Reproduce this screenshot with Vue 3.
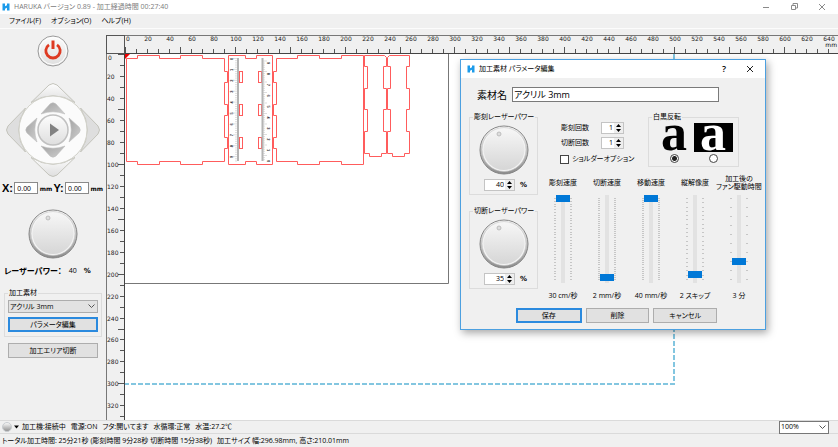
<script setup>
import { ref } from 'vue'

const SCALE = 1.098
const px = (mm) => Math.round(mm * SCALE)
const ticks = Array.from({ length: 130 }, (_, i) => i * 10)
const labelsX = Array.from({ length: 32 }, (_, i) => (i + 1) * 20)
const labelsY = labelsX.slice(0, 16)

const material = ref('アクリル 3mm')
const zoom = ref('100%')
const posX = ref('0.00')
const posY = ref('0.00')
const invert = ref('normal')
const shoulder = ref(false)

const powers = ref([
  { id: 'engrave-power', title: '彫刻レーザーパワー', value: 40 },
  { id: 'cut-power', title: '切断レーザーパワー', value: 35 },
])
const counts = ref([
  { id: 'engrave-count', title: '彫刻回数', value: 1 },
  { id: 'cut-count', title: '切断回数', value: 1 },
])
const sliders = ref([
  { id: 's1', title: ['彫刻速度'], marks: 30, value: 100, text: '30 cm/秒' },
  { id: 's2', title: ['切断速度'], marks: 40, value: 3, text: '2 mm/秒' },
  { id: 's3', title: ['移動速度'], marks: 40, value: 100, text: '40 mm/秒' },
  { id: 's4', title: ['縦解像度'], marks: 20, value: 6, text: '2 スキップ' },
  { id: 's5', title: ['加工後の', 'ファン駆動時間'], marks: 10, value: 22, text: '3 分' },
])
const markY = (i, n) => Math.round((i * 81) / (n - 1)) + 3

const slots = [17, 50, 83]
const digits = Array.from({ length: 10 }, (_, i) => i)
const fineMarks = Array.from({ length: 48 }, (_, i) => i)
</script>

<template>
  <div class="app">
    <svg class="defs" width="0" height="0" aria-hidden="true">
      <defs>
        <linearGradient id="rim" x1="0" y1="0" x2="0" y2="1">
          <stop offset="0" stop-color="#ffffff" />
          <stop offset="1" stop-color="#8c8c8c" />
        </linearGradient>
        <linearGradient id="face" x1="0" y1="0" x2="0" y2="1">
          <stop offset="0" stop-color="#f6f6f6" />
          <stop offset="1" stop-color="#d6d6d6" />
        </linearGradient>
        <linearGradient id="pad" x1="0" y1="0" x2="0" y2="1">
          <stop offset="0" stop-color="#fdfdfd" />
          <stop offset="1" stop-color="#dedede" />
        </linearGradient>
        <linearGradient id="arrow" x1="0" y1="0" x2="1" y2="1">
          <stop offset="0" stop-color="#a2a2a2" />
          <stop offset="1" stop-color="#cfcfcf" />
        </linearGradient>
        <symbol id="knob" viewBox="0 0 50 50">
          <circle cx="25" cy="25" r="24" fill="url(#rim)" stroke="#858585" />
          <circle cx="25" cy="24.5" r="22" fill="#f4f4f4" stroke="#c2c2c2" stroke-width=".6" />
          <circle cx="25" cy="24.5" r="20.5" fill="url(#face)" />
          <circle cx="20" cy="9" r="2" fill="#dedede" stroke="#b4b4b4" stroke-width=".8" />
        </symbol>
        <symbol id="logo" viewBox="0 0 8 8">
          <path d="M0.500 0.500h2.500v2.700l2-1V0.500h2.500v7H5V4.800l-2 1v1.700H0.500z" fill="#1d9bea" />
        </symbol>
      </defs>
    </svg>

    <header class="titlebar">
      <svg class="logo" aria-hidden="true"><use href="#logo" /></svg>
      <h1>HARUKA バージョン 0.89 - 加工経過時間 00:27:40</h1>
      <div class="winbtns">
        <button type="button" aria-label="最小化"><svg width="8" height="8"><path d="M1 4.500h6" /></svg></button>
        <button type="button" aria-label="元に戻す"><svg width="8" height="8"><path d="M1.500 2.500h4v4h-4zM3 2V.5h4.500V5H6" /></svg></button>
        <button type="button" aria-label="閉じる"><svg width="8" height="8"><path d="M1 1l6 6M7 1L1 7" /></svg></button>
      </div>
    </header>

    <nav class="menubar">
      <a href="#file">ファイル(F)</a>
      <a href="#option">オプション(O)</a>
      <a href="#help">ヘルプ(H)</a>
    </nav>

    <main class="main">
      <aside class="side">
        <button type="button" class="power" aria-label="電源">
          <svg width="32" height="32" viewBox="0 0 32 32">
            <circle cx="16" cy="16" r="15" fill="url(#pad)" stroke="#9a9a9a" />
            <circle cx="16" cy="16" r="13.500" fill="none" stroke="#fff" />
            <path d="M12 9.800a7.200 7.200 0 1 0 8 0" fill="none" stroke="#de3a22" stroke-width="2.800" />
            <path d="M16 5.500v8.500" stroke="#de3a22" stroke-width="3" />
          </svg>
        </button>

        <div class="dpad">
          <svg viewBox="0 0 96 96" aria-hidden="true">
            <g fill="url(#pad)" stroke="#c4c4bc">
              <path d="M26 20.500L44 3Q48 0 52 3L70 20.500Q48 7 26 20.500z" />
              <path d="M26 75.500L44 93Q48 96 52 93L70 75.500Q48 89 26 75.500z" />
              <path d="M20.500 26L3 44Q0 48 3 52L20.500 70Q7 48 20.500 26z" fill="#dedede" />
              <path d="M75.500 26L93 44Q96 48 93 52L75.500 70Q89 48 75.500 26z" fill="#dedede" />
            </g>
            <circle cx="48" cy="48" r="34" fill="#fbfbfb" stroke="#d2d2ca" />
            <g fill="url(#arrow)" stroke="#bdbdbd" stroke-width=".6">
              <path d="M36 32L45 22Q48 19.500 51 22L60 32Q48 27.500 36 32z" />
              <path d="M36 64L45 74Q48 76.500 51 74L60 64Q48 68.500 36 64z" />
              <path d="M32 36L22 45Q19.500 48 22 51L32 60Q27.500 48 32 36z" />
              <path d="M64 36L74 45Q76.500 48 74 51L64 60Q68.500 48 64 36z" />
            </g>
            <circle cx="48" cy="48" r="15" fill="url(#pad)" stroke="#c0c0c0" stroke-width="1.500" />
            <path d="M45 41.500v13l9-6.500z" fill="#828282" />
          </svg>
          <button type="button" class="up" aria-label="上"></button>
          <button type="button" class="left" aria-label="左"></button>
          <button type="button" class="center" aria-label="開始"></button>
          <button type="button" class="right" aria-label="右"></button>
          <button type="button" class="down" aria-label="下"></button>
        </div>

        <div class="coords">
          <label for="px">X:</label><input id="px" v-model="posX" type="text" /><b>mm</b>
          <label for="py">Y:</label><input id="py" v-model="posY" type="text" /><b>mm</b>
        </div>

        <svg class="knob" aria-hidden="true"><use href="#knob" /></svg>
        <p class="laser"><b>レーザーパワー：</b><span>40</span><b>%</b></p>

        <fieldset class="group material">
          <legend>加工素材</legend>
          <span class="select">
            <select v-model="material" aria-label="加工素材"><option>アクリル 3mm</option></select>
            <svg width="7" height="5"><path d="M.5.5l3 3 3-3" /></svg>
          </span>
          <button type="button" class="btn primary">パラメータ編集</button>
        </fieldset>
        <button type="button" class="btn area">加工エリア切断</button>
      </aside>

      <section class="work">
        <div class="corner"></div>
        <div class="hruler">
          <svg>
            <path v-for="t in ticks" :key="t" :d="`M${px(t) + 0.5} ${t % 50 ? 13 : 11}V18`" />
            <text x="1" y="5">0</text>
            <text v-for="l in labelsX" :key="l" :x="px(l) + 1" y="5" text-anchor="middle">{{ l }}</text>
          </svg>
          <b>mm</b>
        </div>
        <div class="vruler">
          <svg>
            <path v-for="t in ticks" :key="t" :d="`M${t % 50 ? 13 : 11} ${px(t) + 0.5}H18`" />
            <text x="1" y="6">0</text>
            <text v-for="l in labelsY" :key="l" x="0" :y="px(l) + 3">{{ l }}</text>
          </svg>
        </div>
        <div class="canvas">
          <svg>
            <path class="sheet" d="M323.500 0V229.500H0" />
            <path class="bed" d="M549 0V330H0" />
            <path class="origin" d="M0 0h5L0 5z" />
            <g class="cut">
              <path d="M1.500 4.500H12.500V1.500H34.500V4.500H55.500V1.500H77.500V4.500H99.500V17.500H102.500V28.500H99.500V50.500H102.500V61.500H99.500V83.500H102.500V94.500H99.500V107.500H77.500V110.500H55.500V107.500H34.500V110.500H12.500V107.500H1.500z" />
              <path d="M103.500 1.500H120.500V4.500H131.500V1.500H147.500V110.500H131.500V107.500H120.500V110.500H103.500z" />
              <g v-for="s in slots" :key="s">
                <rect x="114.500" :y="s + 0.5" width="3" height="11" />
                <rect x="133.500" :y="s + 0.5" width="3" height="11" />
              </g>
              <path d="M151.500 4.500H172.500V1.500H194.500V4.500H216.500V1.500H238.500V110.500H216.500V107.500H194.500V110.500H172.500V107.500H151.500V94.500H148.500V83.500H151.500V61.500H148.500V50.500H151.500V28.500H148.500V17.500H151.500z" />
              <path d="M239.500 1.500H259.500L261.500 3.500V12.500H258.500V34.500H261.500V55.500H258.500V77.500H261.500V99.500H256.500V102.500H244.500V99.500H239.500V77.500H242.500V55.500H239.500V34.500H242.500V12.500H239.500z" />
              <path d="M264.500 1.500H284.500V12.500H281.500V34.500H284.500V55.500H281.500V77.500H284.500V99.500H279.500V102.500H267.500V99.500H262.500V77.500H265.500V55.500H262.500V34.500H265.500V12.500H262.500V3.500z" />
            </g>
            <g class="scale">
              <path d="M113 4V107M137.500 4V107" class="bar" />
              <path v-for="m in fineMarks" :key="m" :d="`M${m % 5 ? 110 : 108} ${4.5 + m * 2.18}H112M138 ${7 + m * 2.1}H${m % 5 ? 140 : 142}`" />
              <g v-for="d in digits" :key="d">
                <text :transform="`translate(108 ${6 + d * 10.9}) rotate(-90)`">{{ d }}</text>
                <text :transform="`translate(142 ${106 - d * 10.9}) rotate(90)`">{{ d }}</text>
              </g>
            </g>
          </svg>
        </div>
      </section>
    </main>

    <footer class="status">
      <div class="row">
        <svg width="24" height="12" aria-hidden="true">
          <circle cx="7" cy="6" r="4.500" fill="url(#rim)" stroke="#c8ccd0" />
          <path d="M14 4.500h5l-2.500 3z" />
        </svg>
        <span>加工機:接続中</span><span>電源:ON</span><span>フタ:開いてます</span><span>水循環:正常</span><span>水温:27.2℃</span>
        <span class="select zoom">
          <select v-model="zoom" aria-label="表示倍率"><option>100%</option></select>
          <svg width="7" height="5"><path d="M.5.5l3 3 3-3" /></svg>
        </span>
      </div>
      <div class="row totals">
        <span>トータル加工時間: 25分21秒 (彫刻時間 9分28秒 切断時間 15分38秒)</span><span>加工サイズ 幅:296.98mm, 高さ:210.01mm</span>
      </div>
    </footer>

    <section class="dialog" role="dialog" aria-labelledby="dlg-title">
      <header>
        <svg class="logo" aria-hidden="true"><use href="#logo" /></svg>
        <h2 id="dlg-title">加工素材 パラメータ編集</h2>
        <button type="button" class="help">?</button>
        <button type="button" aria-label="閉じる"><svg width="8" height="8"><path d="M1 1l6 6M7 1L1 7" /></svg></button>
      </header>

      <form @submit.prevent>
        <div class="name">
          <label for="mat-name">素材名</label>
          <input id="mat-name" v-model="material" type="text" />
        </div>

        <div class="params">
          <div class="powers">
            <fieldset v-for="p in powers" :key="p.id" class="group">
              <legend>{{ p.title }}</legend>
              <svg class="knob" aria-hidden="true"><use href="#knob" /></svg>
              <div class="pct">
                <span class="spin">
                  <input :id="p.id" v-model="p.value" type="text" :aria-label="p.title" />
                  <svg width="9" height="10"><path d="M2 4l2.500-3L7 4zM2 6l2.500 3L7 6z" /></svg>
                </span>
                <b>%</b>
              </div>
            </fieldset>
          </div>

          <div class="right">
            <div class="options">
              <div class="counts">
                <div v-for="c in counts" :key="c.id" class="count">
                  <label :for="c.id">{{ c.title }}</label>
                  <span class="spin small">
                    <input :id="c.id" v-model="c.value" type="text" />
                    <svg width="9" height="10"><path d="M2 4l2.500-3L7 4zM2 6l2.500 3L7 6z" /></svg>
                  </span>
                </div>
                <label class="check"><input v-model="shoulder" type="checkbox" />ショルダーオプション</label>
              </div>
              <fieldset class="group invert">
                <legend>白黒反転</legend>
                <label><span>a</span><input v-model="invert" type="radio" name="invert" value="normal" /></label>
                <label><span class="neg">a</span><input v-model="invert" type="radio" name="invert" value="inverted" /></label>
              </fieldset>
            </div>

            <div class="sliders">
              <div v-for="s in sliders" :key="s.id" class="slider">
                <label :for="s.id"><span v-for="t in s.title" :key="t">{{ t }}</span></label>
                <div class="rail">
                  <svg width="20" height="88" aria-hidden="true">
                    <rect x="8" y="0" width="4" height="88" fill="#e2e2e2" />
                    <path v-for="i in s.marks" :key="i" :d="`M1 ${markY(i - 1, s.marks) + 0.5}h2M17 ${markY(i - 1, s.marks) + 0.5}h2`" />
                  </svg>
                  <input :id="s.id" v-model="s.value" type="range" min="0" max="100" />
                </div>
                <output :for="s.id">{{ s.text }}</output>
              </div>
            </div>
          </div>
        </div>

        <div class="actions">
          <button type="submit" class="btn primary">保存</button>
          <button type="button" class="btn">削除</button>
          <button type="button" class="btn">キャンセル</button>
        </div>
      </form>
    </section>
  </div>
</template>

<style>
body {
  margin: 0;
  background: #f0f0f0;
}
</style>

<style scoped>
* {
  box-sizing: border-box;
}
.app {
  position: relative;
  display: flex;
  flex-direction: column;
  height: 100vh;
  overflow: hidden;
  background: #f0f0f0;
  color: #000;
  font-family: "Open Sans", "Noto Sans CJK JP", sans-serif;
  font-size: 7px;
  line-height: 10px;
  font-feature-settings: "palt";
}
button, input, select {
  margin: 0;
  padding: 0;
  border: 0;
  border-radius: 0;
  background: none;
  color: inherit;
  font: inherit;
  font-feature-settings: inherit;
}
h1, h2, p {
  margin: 0;
  font-size: 7px;
  font-weight: 400;
}
svg {
  display: block;
  flex: none;
}
.defs {
  position: absolute;
}
.logo {
  width: 8px;
  height: 8px;
}
.titlebar {
  display: flex;
  align-items: center;
  gap: 4px;
  height: 14px;
  padding: 0 12px 0 2px;
  background: #fff;
}
.titlebar h1 {
  flex: 1;
  color: #7c7c7c;
}
.winbtns {
  display: flex;
  gap: 20px;
}
.winbtns path {
  fill: none;
  stroke: #8a8a8a;
}
.menubar {
  display: flex;
  align-items: center;
  gap: 10px;
  height: 15px;
  padding: 0 9px;
  border-bottom: 1px solid #fcfcfc;
}
.menubar a {
  color: inherit;
  text-decoration: none;
}
.main {
  display: flex;
  flex: 1;
  min-height: 0;
  padding-top: 6px;
}
.side {
  display: flex;
  flex-direction: column;
  align-items: center;
  width: 106px;
  padding: 0 4px;
}
.power {
  height: 32px;
}
.dpad {
  display: grid;
  grid-template: repeat(3, 32px) / repeat(3, 32px);
  margin-top: 15px;
}
.dpad svg {
  grid-area: 1 / 1 / 4 / 4;
}
.dpad .up { grid-area: 1 / 2; }
.dpad .left { grid-area: 2 / 1; }
.dpad .center { grid-area: 2 / 2; }
.dpad .right { grid-area: 2 / 3; }
.dpad .down { grid-area: 3 / 2; }
.coords {
  display: flex;
  align-items: center;
  align-self: stretch;
  justify-content: space-between;
  margin: 4px -1px 0 -2px;
}
.coords label {
  font: 700 11px "Liberation Sans", sans-serif;
}
.coords input {
  width: 24px;
  height: 12px;
  padding-left: 2px;
  border: 1px solid #8a8a8a;
  background: #fff;
  font: 7px "Liberation Sans", sans-serif;
}
.coords b {
  font: 700 6px "DejaVu Sans", sans-serif;
}
.knob {
  width: 50px;
  height: 50px;
}
.side > .knob {
  margin-top: 15px;
}
.laser {
  display: flex;
  align-items: center;
  align-self: stretch;
  gap: 7px;
  margin-top: 7px;
}
.laser b:first-child {
  font-size: 8px;
}
.laser b:last-child,
.pct b {
  font: 700 7px "DejaVu Sans", sans-serif;
}
.group {
  min-width: 0;
  margin: 0;
  padding: 0;
  border: 1px solid #dcdcdc;
}
.group legend {
  height: 10px;
  margin-left: 3px;
  padding: 0 1px;
  white-space: nowrap;
}
.material {
  display: flex;
  flex-direction: column;
  align-self: stretch;
  gap: 4px;
  margin-top: 12px;
  padding: 2px 3px 4px;
}
.material legend {
  margin-left: 0;
}
.select {
  position: relative;
  display: flex;
  align-items: center;
  height: 13px;
  border: 1px solid #adadad;
  background: #e2e2e2;
}
.select select {
  flex: 1;
  width: 100%;
  height: 11px;
  padding-left: 1px;
  appearance: none;
}
.select svg {
  position: absolute;
  right: 2px;
  pointer-events: none;
}
.select path {
  fill: none;
  stroke: #555;
}
.btn {
  height: 15px;
  border: 1px solid #adadad;
  background: #e1e1e1;
  text-align: center;
}
.btn.primary {
  border: 2px solid #2b8ade;
}
.area {
  align-self: stretch;
  margin: 6px 4px 0;
}
.work {
  display: grid;
  flex: 1;
  grid-template: 19px minmax(0, 1fr) / 19px minmax(0, 1fr);
  min-width: 0;
}
.corner {
  border: 1px solid #555;
}
.hruler,
.vruler {
  overflow: hidden;
}
.hruler {
  position: relative;
  border-top: 1px solid #777;
  border-bottom: 1px solid #444;
}
.vruler {
  border-left: 1px solid #777;
  border-right: 1px solid #444;
}
.hruler svg,
.vruler svg,
.canvas svg {
  width: 100%;
  height: 100%;
}
.hruler path,
.vruler path {
  stroke: #555;
}
.hruler text,
.vruler text,
.hruler b {
  fill: #222;
  font: 6px "DejaVu Sans", sans-serif;
}
.hruler b {
  position: absolute;
  right: 1px;
  top: 5px;
}
.canvas {
  overflow: hidden;
  background: #fff;
}
.canvas path,
.canvas rect {
  fill: none;
}
.canvas .sheet {
  stroke: #777;
}
.canvas .bed {
  stroke: #83c6e0;
  stroke-width: 2px;
  stroke-dasharray: 5 2;
}
.canvas .origin {
  fill: #e00;
}
.cut path,
.cut rect {
  stroke: #ff5c5c;
}
.scale path {
  stroke: #bbb;
  stroke-width: .5px;
}
.scale .bar {
  stroke: #b4b4b4;
  stroke-width: 2px;
}
.scale text {
  fill: #222;
  font: 700 4px "Liberation Sans", sans-serif;
}
.status .row {
  display: flex;
  align-items: center;
  gap: 5px;
  height: 13px;
  padding-right: 9px;
  border-top: 1px solid #dadada;
}
.status .row > svg {
  margin-right: -7px;
}
.status .totals {
  height: 14px;
  padding-left: 2px;
}
.zoom {
  width: 50px;
  margin-left: auto;
  border-color: #777;
  background: #fff;
}
.dialog {
  position: absolute;
  left: 460px;
  top: 59px;
  width: 306px;
  border: 1px solid #4ca0e0;
  background: #f0f0f0;
  box-shadow: 2px 3px 8px rgba(0, 0, 0, .35);
}
.dialog header {
  display: flex;
  align-items: center;
  height: 18px;
  padding: 0 11px 0 6px;
  background: #fff;
}
.dialog h2 {
  flex: 1;
  margin-left: 4px;
}
.dialog .help {
  margin-right: 20px;
  font-size: 9px;
  font-weight: 600;
}
.dialog header path {
  fill: none;
  stroke: #222;
}
.name {
  display: flex;
  align-items: center;
  gap: 5px;
  padding: 9px 46px 0 16px;
  font-size: 10px;
}
.name input {
  flex: 1;
  min-width: 0;
  height: 15px;
  padding-left: 1px;
  border: 1px solid #7a7a7a;
  background: #fff;
  font-size: 9px;
}
.params {
  display: flex;
  gap: 3px;
  padding: 10px 3px 0 8px;
}
.powers {
  display: flex;
  flex-direction: column;
  gap: 11px;
  width: 69px;
}
.powers .group {
  display: flex;
  flex-direction: column;
  align-items: center;
  height: 83px;
}
.powers .knob {
  margin-top: 3px;
}
.pct {
  display: flex;
  align-items: center;
  gap: 5px;
  margin: 4px 0 0 4px;
}
.spin {
  display: flex;
  align-items: center;
  width: 31px;
  height: 12px;
  border: 1px solid #c4c4c4;
  background: #fff;
}
.spin input {
  flex: 1;
  width: 10px;
  height: 10px;
  padding-right: 1px;
  text-align: right;
}
.spin svg {
  background: #eee;
}
.spin.small {
  width: 23px;
}
.right {
  flex: 1;
  min-width: 0;
}
.options {
  display: flex;
  justify-content: space-between;
  padding-right: 23px;
}
.counts {
  display: flex;
  flex-direction: column;
  gap: 3px;
  padding: 10px 0 0 19px;
}
.count {
  display: flex;
  align-items: center;
  justify-content: space-between;
  width: 64px;
  padding-left: 1px;
}
.check {
  display: flex;
  align-items: center;
  gap: 3px;
  margin-top: 2px;
  white-space: nowrap;
}
.check input {
  width: 9px;
  height: 9px;
  border: 1px solid #444;
  background: #fff;
  appearance: none;
}
.check input:checked {
  background: #0078d7;
}
.invert {
  display: flex;
  justify-content: center;
  width: 91px;
  height: 55px;
}
.invert label {
  display: flex;
  flex-direction: column;
  align-items: center;
  gap: 2px;
  width: 39px;
  padding-top: 1px;
}
.invert span {
  width: 39px;
  height: 29px;
  font: 700 52px/19px "Liberation Serif", serif;
  text-align: center;
}
.invert .neg {
  background: #000;
  color: #fff;
}
.invert input {
  width: 9px;
  height: 9px;
  border: 1px solid #444;
  border-radius: 50%;
  background: #fff;
  appearance: none;
}
.invert input:checked {
  background: radial-gradient(circle, #222 0 2px, #fff 3px);
}
.sliders {
  display: grid;
  grid-template-columns: repeat(5, 44px);
}
.slider {
  display: flex;
  flex-direction: column;
  align-items: center;
  white-space: nowrap;
}
.slider label {
  display: flex;
  flex-direction: column;
  align-items: center;
  justify-content: center;
  height: 28px;
  padding-top: 4px;
  line-height: 8px;
}
.rail {
  display: grid;
}
.rail svg,
.rail input {
  grid-area: 1 / 1;
}
.rail path {
  stroke: #c6c6c6;
}
.rail input {
  width: 20px;
  height: 88px;
  writing-mode: vertical-lr;
  direction: rtl;
  appearance: none;
}
.rail input::-webkit-slider-runnable-track {
  display: flex;
  width: 20px;
}
.rail input::-webkit-slider-thumb {
  width: 14px;
  height: 7px;
  margin: 0 3px;
  background: #0078d7;
  appearance: none;
}
.slider output {
  margin-top: 8px;
}
.actions {
  display: flex;
  gap: 4px;
  padding: 7px 48px 6px 55px;
}
.actions .btn {
  flex: 1;
}
</style>
